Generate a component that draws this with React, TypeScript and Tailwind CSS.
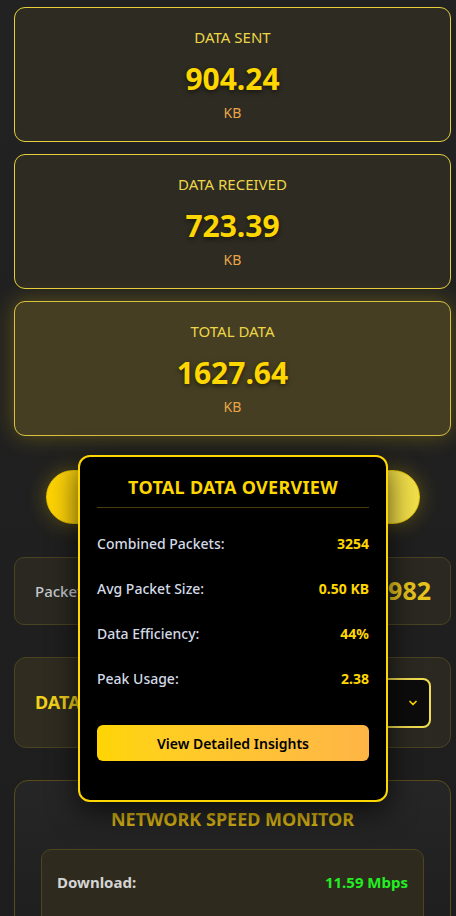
import React from "react";

const font = "font-['Noto_Sans','DejaVu_Sans',sans-serif]";

function StatCard({ label, value, active }: { label: string; value: string; active?: boolean }) {
  return (
    <div
      className={`rounded-[11px] border text-center pt-[18px] pb-[18px] ${
        active
          ? "bg-[#453e22] border-[#d8c040] shadow-[0_0_22px_rgba(255,215,0,0.28)]"
          : "bg-[#2e2b22] border-[#e6cf3a]"
      }`}
    >
      <div className="text-[15px] leading-[22px] text-[#ecd648]">{label}</div>
      <div className="mt-[13px] text-[30px] leading-[36px] font-bold text-[#ffd700] [text-shadow:0_2px_5px_rgba(0,0,0,0.55)]">
        {value}
      </div>
      <div className="mt-[6px] text-[14px] leading-[20px] text-[#e8a548]">KB</div>
    </div>
  );
}

function Row({ label, value }: { label: string; value: string }) {
  return (
    <div className="flex items-center justify-between py-[12px]">
      <span className="text-[14px] leading-[21px] font-medium text-[#d3dae6]">{label}</span>
      <span className="text-[14px] leading-[21px] font-bold text-[#ffd700]">{value}</span>
    </div>
  );
}

export default function App() {
  return (
    <div className={`${font} relative min-h-screen overflow-hidden bg-gradient-to-b from-[#222222] to-[#1d1d1d] pl-[14px] pr-[5px] pt-[7px] pb-10`}>
      <div className="flex flex-col gap-[12px]">
        <StatCard label="DATA SENT" value="904.24" />
        <StatCard label="DATA RECEIVED" value="723.39" />
        <StatCard label="TOTAL DATA" value="1627.64" active />
      </div>

      <button className="mx-auto mt-[34px] block h-[54px] w-[374px] rounded-full border border-[#e6c400] bg-gradient-to-r from-[#ffd400] to-[#f2e04a] text-[16px] font-bold text-black shadow-[0_0_20px_rgba(255,215,0,0.3)]">
        Show Total Data Details
      </button>

      <div className="mt-[33px] flex h-[68px] items-center justify-between rounded-[10px] border border-[#4a4322] bg-[#2a2820] pl-[20px] pr-[19px]">
        <span className="text-[15px] font-medium text-[#c4c8ce]">Packets Sent</span>
        <span className="text-[25px] font-bold text-[#e6c41c]">4982</span>
      </div>

      <div className="mt-[32px] flex h-[91px] items-center justify-between rounded-[12px] border border-[#4a4322] bg-gradient-to-r from-[#302c20] to-[#2a2820] pl-[20px] pr-[19px]">
        <span className="text-[18px] font-bold text-[#f2d21a]">DATA UNIT:</span>
        <div className="flex h-[50px] w-[220px] items-center justify-between rounded-[8px] border-2 border-[#f0dc50] bg-[#0c0c0c] pl-3 pr-[10px]">
          <span className="text-[14px] text-[#ffd700]">Kilobytes (KB)</span>
          <svg width="12" height="12" viewBox="0 0 24 24" fill="none" stroke="#ffd700" strokeWidth="3.5" strokeLinecap="round" strokeLinejoin="round">
            <path d="M6 9l6 6 6-6" />
          </svg>
        </div>
      </div>

      <div className="mt-[32px] rounded-[14px] border border-[#5a4c18] bg-gradient-to-b from-[#262626] to-[#1b1b1b] px-[26px] pt-[26px] pb-6">
        <div className="text-center text-[18px] leading-[24px] font-bold text-[#d2ae10]">NETWORK SPEED MONITOR</div>
        <div className="mt-[18px] rounded-[10px] border border-[#4e4420] bg-[#2e2a1e] px-[15px] py-[21px]">
          <div className="flex items-center justify-between">
            <span className="text-[15px] font-bold text-[#d4d4d4]">Download:</span>
            <span className="text-[15px] font-bold text-[#22ee22]">11.59 Mbps</span>
          </div>
          <div className="mt-6 flex items-center justify-between">
            <span className="text-[15px] font-bold text-[#d4d4d4]">Upload:</span>
            <span className="text-[15px] font-bold text-[#22ee22]">4.12 Mbps</span>
          </div>
        </div>
      </div>

      <div className="absolute left-[78px] top-[455px] w-[310px] rounded-[12px] border-2 border-[#ffd700] bg-black px-[17px] pt-[18px] pb-[39px] shadow-[0_8px_30px_rgba(0,0,0,0.7)]">
        <div className="border-b border-[#4a3d0c] pb-[7px] text-center text-[18px] leading-[25px] tracking-[0.3px] font-bold text-[#ffd700]">
          TOTAL DATA OVERVIEW
        </div>
        <div className="mt-[13px]">
          <Row label="Combined Packets:" value="3254" />
          <Row label="Avg Packet Size:" value="0.50 KB" />
          <Row label="Data Efficiency:" value="44%" />
          <Row label="Peak Usage:" value="2.38" />
        </div>
        <button className="mt-[24px] h-[36px] w-full rounded-[6px] bg-gradient-to-r from-[#ffd500] to-[#ffb545] text-[14px] font-semibold text-black">
          View Detailed Insights
        </button>
      </div>
    </div>
  );
}
